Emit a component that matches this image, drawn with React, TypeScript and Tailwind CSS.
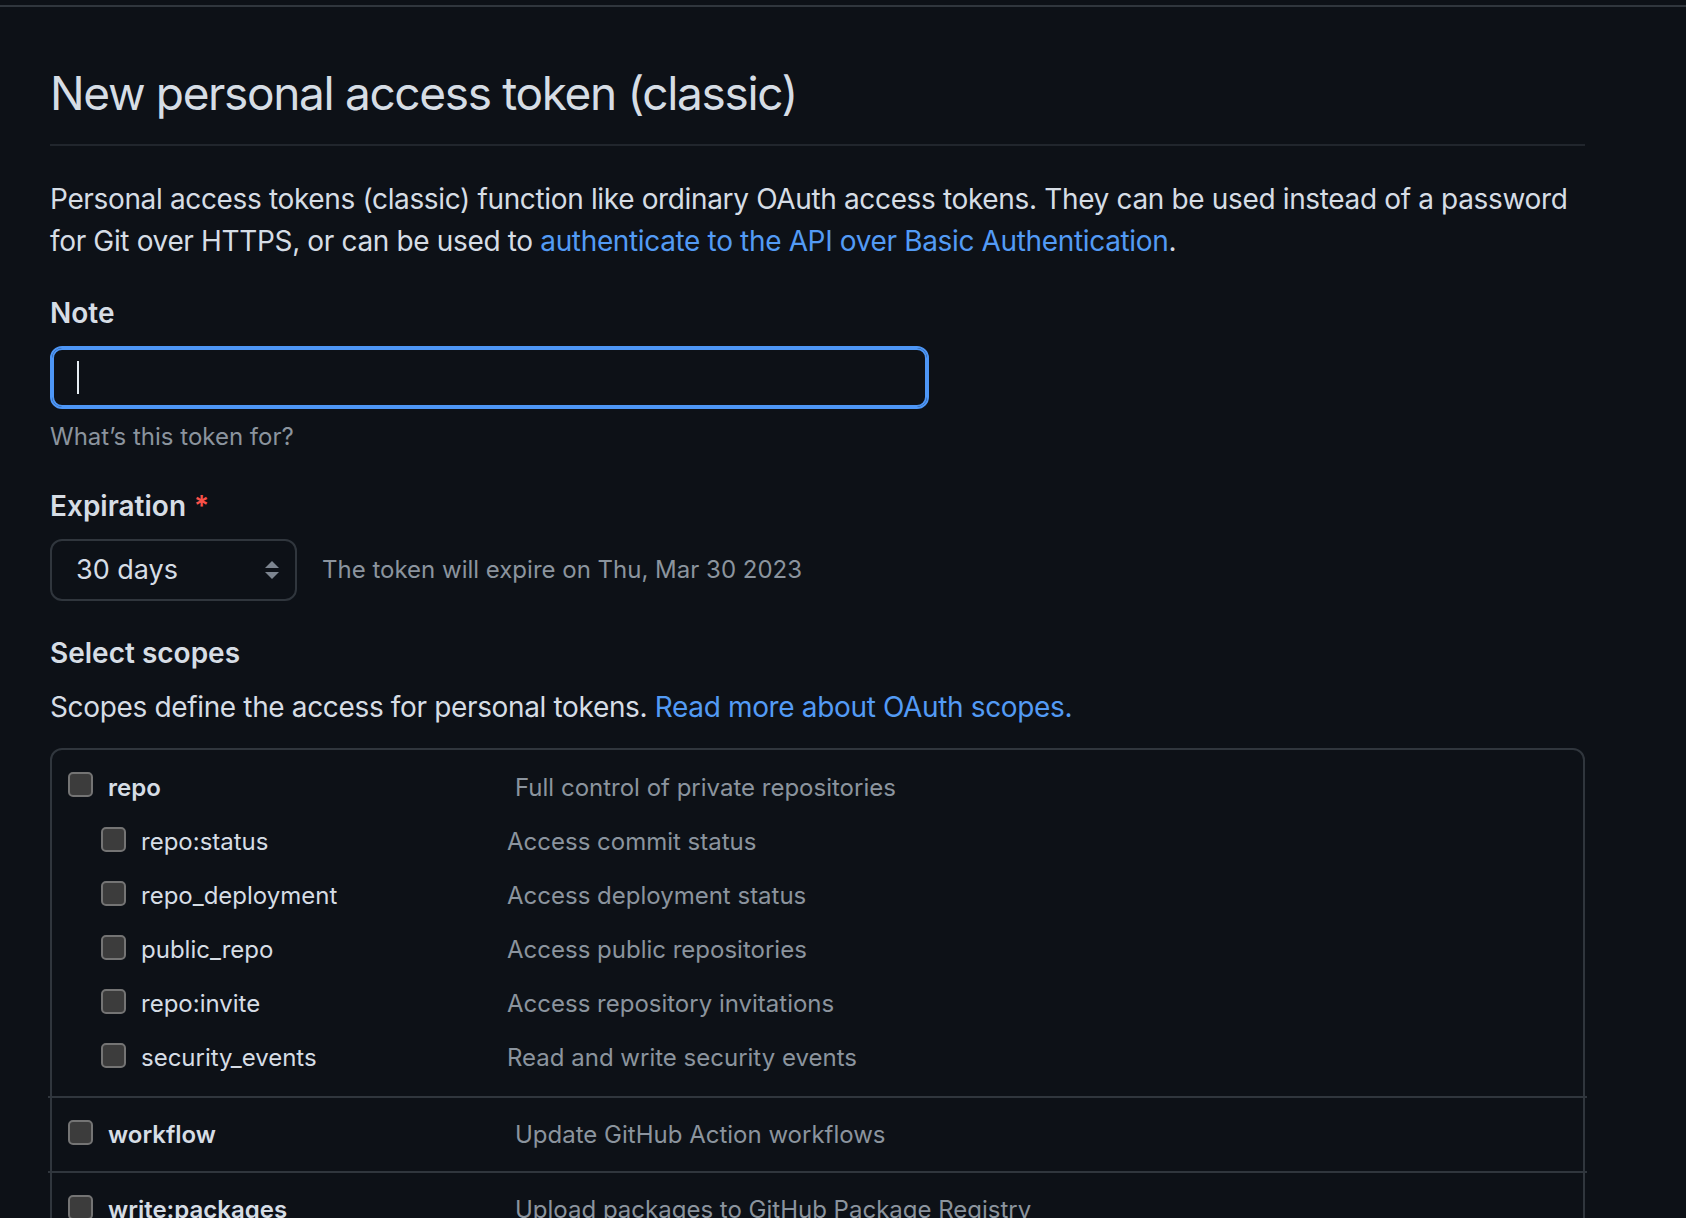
// ============================================================
// New personal access token (classic): GitHub dark settings form
// ============================================================

const SUB_SCOPES: [string, string][] = [
  ['repo:status', 'Access commit status'],
  ['repo_deployment', 'Access deployment status'],
  ['public_repo', 'Access public repositories'],
  ['repo:invite', 'Access repository invitations'],
  ['security_events', 'Read and write security events'],
];

const TOP_SCOPES: [string, string][] = [
  ['workflow', 'Update GitHub Action workflows'],
  ['write:packages', 'Upload packages to GitHub Package Registry'],
  ['read:packages', 'Download packages from GitHub Package Registry'],
];

// Native-looking unchecked checkbox (dark colour scheme)
function Checkbox({ className = '' }: { className?: string }) {
  return (
    <span
      className={`block w-[25px] h-[25px] shrink-0 rounded-[5px] border-2 border-[#747474] bg-[#3c3c3c] ${className}`}
    />
  );
}

function SelectArrows() {
  return (
    <svg width="14" height="18" viewBox="0 0 14 18" className="shrink-0">
      <path d="M0 7 L7 0 L14 7 Z" fill="#7d8590" />
      <path d="M0 11 L14 11 L7 18 Z" fill="#7d8590" />
    </svg>
  );
}

function Divider() {
  return <div className="h-[2px] -mx-[4px] bg-[#30363d]" />;
}

export default function App() {
  return (
    <div className="h-[1218px] overflow-hidden bg-[#0d1117] text-[#d6dde5] font-['Inter','Noto_Sans',sans-serif]">
      {/* header bottom edge */}
      <div className="h-[5px]" />
      <div className="h-[2px] bg-[#30363d]" />

      <div className="ml-[50px] w-[1535px]">
        {/* Subhead */}
        <div className="pt-[56px] pb-[21px] border-b-2 border-[#21262d]">
          <h1 className="text-[46px] leading-[60px] tracking-[-1.35px] font-normal">
            New personal access token (classic)
          </h1>
        </div>

        <p className="mt-[32px] text-[28px] leading-[42px] tracking-[-0.35px]">
          Personal access tokens (classic) function like ordinary OAuth access tokens. They can be used instead of a password
          <br />
          for Git over HTTPS, or can be used to{' '}
          <a className="text-[#539bf5]">authenticate to the API over Basic Authentication</a>.
        </p>

        {/* Note */}
        <div className="mt-[30px] text-[28px] leading-[42px] font-semibold">Note</div>
        <div className="mt-[12px] w-[879px] h-[63px] rounded-[12px] border-2 border-[#4d96f6] shadow-[inset_0_0_0_2px_#4d96f6] flex items-center">
          <span className="ml-[25px] w-[2px] h-[33px] bg-[#e6edf3]" />
        </div>
        <div className="mt-[10px] text-[24px] leading-[36px] text-[#8b949e]">What’s this token for?</div>

        {/* Expiration */}
        <div className="mt-[30px] text-[28px] leading-[42px] font-semibold">
          Expiration <span className="ml-[1px] text-[#f85149]">*</span>
        </div>
        <div className="mt-[12px] flex items-center">
          <div className="w-[247px] h-[62px] rounded-[12px] border-2 border-[#30363d] flex items-center justify-between pl-[24px] pr-[16px]">
            <span className="text-[27px]">30 days</span>
            <SelectArrows />
          </div>
          <span className="ml-[25px] text-[24px] text-[#8b949e]">The token will expire on Thu, Mar 30 2023</span>
        </div>

        {/* Scopes */}
        <div className="mt-[31px] text-[28px] leading-[42px] font-semibold">Select scopes</div>
        <p className="mt-[12px] text-[28px] leading-[42px] tracking-[-0.35px]">
          Scopes define the access for personal tokens.{' '}
          <a className="text-[#539bf5]">Read more about OAuth scopes.</a>
        </p>

        <div className="mt-[20px] border-2 border-[#30363d] rounded-[12px] text-[24px]">
          {/* repo group */}
          <div className="pt-[16px] pb-[11px] pl-[16px]">
            <div className="flex items-start h-[44px] leading-[44px]">
              <div className="w-[447px] flex items-start">
                <Checkbox className="mt-[6px]" />
                <span className="ml-[15px] font-semibold">repo</span>
              </div>
              <span className="text-[#8b949e]">Full control of private repositories</span>
            </div>
            <div className="mt-[5px] pl-[33px]">
              {SUB_SCOPES.map(([name, desc]) => (
                <div key={name} className="flex items-start h-[54px] leading-[54px]">
                  <div className="w-[406px] flex items-start">
                    <Checkbox className="mt-[12px]" />
                    <span className="ml-[15px]">{name}</span>
                  </div>
                  <span className="text-[#8b949e]">{desc}</span>
                </div>
              ))}
            </div>
          </div>

          {TOP_SCOPES.map(([name, desc]) => (
            <div key={name}>
              <Divider />
              <div className="pt-[15px] pb-[14px] pl-[16px] flex items-start h-[73px] leading-[44px]">
                <div className="w-[447px] flex items-start">
                  <Checkbox className="mt-[7px]" />
                  <span className="ml-[15px] font-semibold">{name}</span>
                </div>
                <span className="text-[#8b949e]">{desc}</span>
              </div>
            </div>
          ))}
        </div>
      </div>
    </div>
  );
}
